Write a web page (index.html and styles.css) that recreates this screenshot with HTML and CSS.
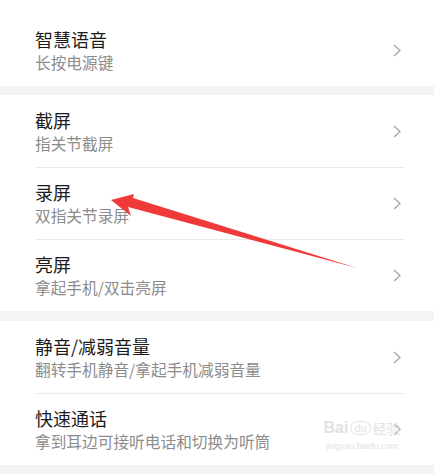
FILE: index.html
```html
<!DOCTYPE html>
<html lang="zh">
<head>
<meta charset="utf-8">
<title>设置</title>
<link rel="stylesheet" href="styles.css">
</head>
<body>
<div class="page">
  <section class="card card-first">
    <div class="row">
      <div class="texts">
        <div class="title">智慧语音</div>
        <div class="sub">长按电源键</div>
      </div>
      <svg class="chev" viewBox="0 0 8 13"><path d="M1 1l6 5.5L1 12"/></svg>
    </div>
  </section>
  <div class="gap"></div>
  <section class="card">
    <div class="row">
      <div class="texts">
        <div class="title">截屏</div>
        <div class="sub">指关节截屏</div>
      </div>
      <svg class="chev" viewBox="0 0 8 13"><path d="M1 1l6 5.5L1 12"/></svg>
    </div>
    <div class="row">
      <div class="texts">
        <div class="title">录屏</div>
        <div class="sub">双指关节录屏</div>
      </div>
      <svg class="chev" viewBox="0 0 8 13"><path d="M1 1l6 5.5L1 12"/></svg>
    </div>
    <div class="row">
      <div class="texts">
        <div class="title">亮屏</div>
        <div class="sub">拿起手机/双击亮屏</div>
      </div>
      <svg class="chev" viewBox="0 0 8 13"><path d="M1 1l6 5.5L1 12"/></svg>
    </div>
  </section>
  <div class="gap"></div>
  <section class="card">
    <div class="row">
      <div class="texts">
        <div class="title">静音/减弱音量</div>
        <div class="sub">翻转手机静音/拿起手机减弱音量</div>
      </div>
      <svg class="chev" viewBox="0 0 8 13"><path d="M1 1l6 5.5L1 12"/></svg>
    </div>
    <div class="row">
      <div class="texts">
        <div class="title">快速通话</div>
        <div class="sub">拿到耳边可接听电话和切换为听筒</div>
      </div>
      <svg class="chev" viewBox="0 0 8 13"><path d="M1 1l6 5.5L1 12"/></svg>
    </div>
  </section>
  <div class="gap"></div>

  <svg class="arrow" viewBox="0 0 434 474">
    <polygon points="111,200 134,194 133,198 357,268 128,207 131,216"/>
  </svg>

  <div class="watermark">
    <div class="wm-line"><span class="wm-bai">Bai</span><span class="wm-du">du</span><span class="wm-jy">经验</span></div>
    <div class="wm-url">jingyan.baidu.com</div>
  </div>
</div>
</body>
</html>
```
FILE: styles.css
```css
* { box-sizing: border-box; }
html, body {
  margin: 0;
  padding: 0;
  background: #ffffff;
}
body {
  font-family: "Noto Sans CJK SC", "Noto Sans", sans-serif;
}
.page {
  position: relative;
  width: 434px;
  height: 474px;
  overflow: hidden;
  background: #ffffff;
}
.card {
  background: #ffffff;
}
.card-first {
  padding-top: 14px;
}
.gap {
  height: 9px;
  background: #f4f4f4;
}
.gap + .card + .gap {
  height: 10px;
}
.row {
  height: 72px;
  margin: 0 30px 0 35px;
  display: flex;
  align-items: center;
  justify-content: space-between;
  border-top: 1px solid #ebebeb;
}
.card-first .row,
.row:first-child {
  border-top: none;
}
.texts {
  display: flex;
  flex-direction: column;
  padding-top: 1px;
}
.title {
  font-size: 18px;
  line-height: 24px;
  color: #1c1c1c;
}
.sub {
  font-size: 15.7px;
  line-height: 24px;
  color: #8c8c8c;
}
.chev {
  width: 8px;
  height: 13px;
  margin-right: 3px;
  fill: none;
  stroke: #a8a8a8;
  stroke-width: 1.4;
}
.arrow {
  position: absolute;
  left: 0;
  top: 0;
  width: 434px;
  height: 474px;
  pointer-events: none;
}
.arrow polygon {
  fill: #f03a3a;
}
.watermark {
  position: absolute;
  left: 317px;
  top: 418px;
  width: 90px;
  text-align: center;
  color: #e2e2e2;
  font-family: "Liberation Sans", sans-serif;
}
.wm-line {
  display: flex;
  align-items: center;
  justify-content: center;
  gap: 2px;
  font-size: 16px;
  line-height: 20px;
}
.wm-bai {
  font-weight: bold;
}
.wm-du {
  font-size: 11px;
  border: 1.5px solid #e2e2e2;
  border-radius: 8px;
  padding: 0 3px;
  line-height: 12px;
}
.wm-jy {
  font-family: "Noto Sans CJK SC", sans-serif;
  font-size: 14px;
}
.wm-url {
  font-size: 9px;
  line-height: 12px;
  margin-top: 2px;
}
```
